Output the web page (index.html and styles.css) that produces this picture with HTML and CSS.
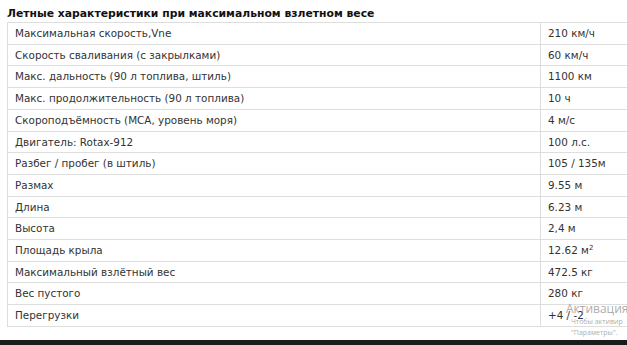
FILE: index.html
```html
<!DOCTYPE html>
<html lang="ru">
<head>
<meta charset="utf-8">
<link rel="stylesheet" href="styles.css">
</head>
<body>
<div class="page">
  <h3 class="title">Летные характеристики при максимальном взлетном весе</h3>
  <table class="specs">
    <tr><td>Максимальная скорость,Vne</td><td>210 км/ч</td></tr>
    <tr><td>Скорость сваливания (с закрылками)</td><td>60 км/ч</td></tr>
    <tr><td>Макс. дальность (90 л топлива, штиль)</td><td>1100 км</td></tr>
    <tr><td>Макс. продолжительность (90 л топлива)</td><td>10 ч</td></tr>
    <tr><td>Скороподъёмность (МСА, уровень моря)</td><td>4 м/с</td></tr>
    <tr><td>Двигатель: Rotax-912</td><td>100 л.с.</td></tr>
    <tr><td>Разбег / пробег (в штиль)</td><td>105 / 135м</td></tr>
    <tr><td>Размах</td><td>9.55 м</td></tr>
    <tr><td>Длина</td><td>6.23 м</td></tr>
    <tr><td>Высота</td><td>2,4 м</td></tr>
    <tr><td>Площадь крыла</td><td>12.62 м<sup>2</sup></td></tr>
    <tr><td>Максимальный взлётный вес</td><td>472.5 кг</td></tr>
    <tr><td>Вес пустого</td><td>280 кг</td></tr>
    <tr><td>Перегрузки</td><td>+4 / -2</td></tr>
  </table>
</div>
<div class="taskbar"></div>
<div class="watermark">
  <div class="wm-big">Активация</div>
  <div class="wm-small">Чтобы активир</div>
  <div class="wm-small">"Параметры".</div>
</div>
</body>
</html>
```
FILE: styles.css
```css
html, body {
  margin: 0;
  padding: 0;
  background: #fff;
  overflow: hidden;
  height: 345px;
}
body {
  font-family: "DejaVu Sans", Verdana, sans-serif;
  color: #333;
  position: relative;
}
.page {
  padding: 7px 0 0 7px;
  height: 333px;
  overflow: hidden;
}
.title {
  margin: 0 0 2px 0;
  font-size: 10.8px;
  line-height: 13px;
  font-weight: bold;
  color: #111;
}
.specs {
  border-collapse: collapse;
  width: 700px;
  font-size: 10.4px;
}
.specs td {
  border: 1px solid #dedede;
  padding: 4px 7px;
  height: 12.7px;
  line-height: 12.7px;
  white-space: nowrap;
}
.specs td:first-child {
  width: 518px;
}
.specs sup {
  font-size: 7px;
  line-height: 0;
  vertical-align: 4px;
}
.taskbar {
  height: 5px;
  background: #1b1b1b;
}
.watermark {
  position: absolute;
  left: 566px;
  top: 303px;
  color: rgba(150, 150, 150, 0.8);
  font-family: "Open Sans", "DejaVu Sans", sans-serif;
  line-height: 1;
}
.wm-big {
  font-size: 12px;
  margin-bottom: 3px;
}
.wm-small {
  font-size: 7px;
  margin-bottom: 4px;
  padding-left: 5px;
}
```
